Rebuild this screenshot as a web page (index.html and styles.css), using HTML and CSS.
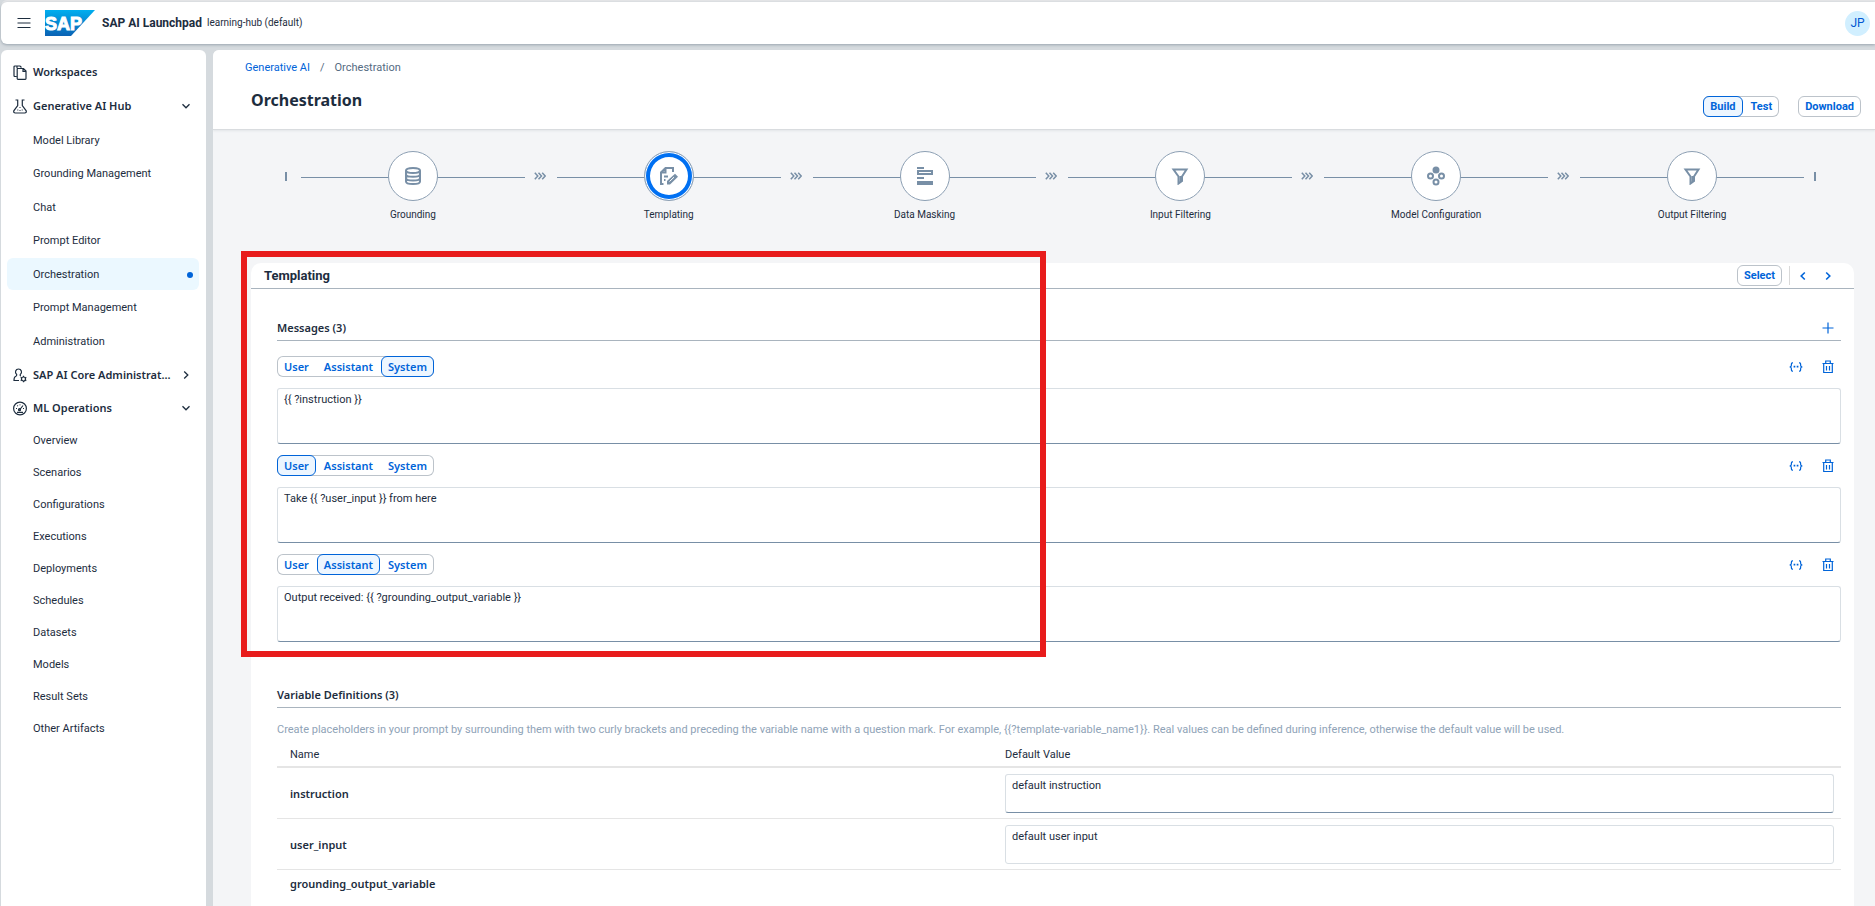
FILE: index.html
```html
<!DOCTYPE html>
<html lang="en">
<head>
<meta charset="utf-8">
<title>SAP AI Launchpad</title>
<link rel="stylesheet" href="styles.css">
</head>
<body>
<svg class="sprite" aria-hidden="true">
  <symbol id="i-down" viewBox="0 0 10 10"><path d="M1.500 3.200 5 6.800l3.500-3.600"/></symbol>
  <symbol id="i-right" viewBox="0 0 10 10"><path d="M3.200 1.500 6.800 5 3.200 8.500"/></symbol>
  <symbol id="i-left" viewBox="0 0 10 10"><path d="M6.800 1.500 3.200 5l3.600 3.500"/></symbol>
  <symbol id="i-plus" viewBox="0 0 12 12"><path d="M6 .5v11M.5 6h11"/></symbol>
  <symbol id="i-trash" viewBox="0 0 12 14"><path d="M.5 3.500h11M3.700 3.300V1h4.600v2.300M1.700 3.700v8.800h8.600V3.700M4.500 6v4.500M7.500 6v4.500"/></symbol>
  <symbol id="i-braces" viewBox="0 0 14 10"><path d="M4 .8H3.300Q2.400.8 2.400 1.900v1.400Q2.400 5 .6 5q1.800 0 1.800 1.700v1.400q0 1.100.9 1.100H4M10 .8h.7q.9 0 .9 1.100v1.400Q11.600 5 13.400 5q-1.800 0-1.800 1.700v1.400q0 1.100-.9 1.100H10"/><path d="M4.600 4.700h1.700M7.700 4.700h1.700" stroke-width="1.800"/></symbol>
  <symbol id="i-filter" viewBox="0 0 18 18"><path d="M2.500 2.500h13L11 9.500v4.500l-3.500 2.500v-7z M9.700 9v5.500"/></symbol>
  <symbol id="i-arrows" viewBox="0 0 12 8"><path d="M.8.7 3.800 4l-3 3.300M4.500.7l3 3.300-3 3.300M8.200.7l3 3.300-3 3.300"/></symbol>
</svg>

<header class="shell">
  <button class="plain menu" aria-label="Menu"><svg width="14" height="10" viewBox="0 0 14 10"><path d="M.5.5h13M.5 5h13M.5 9.500h13"/></svg></button>
  <svg class="logo" width="50" height="26" viewBox="0 0 50 26" role="img" aria-label="SAP">
    <defs><linearGradient id="g" x1="0" y1="0" x2="0" y2="1"><stop offset="0" stop-color="#00aeef"/><stop offset="1" stop-color="#0a62b4"/></linearGradient></defs>
    <path d="M0 0h50L26 26H0z" fill="url(#g)"/>
    <text x="0" y="20" class="logo-text">SAP</text>
  </svg>
  <strong class="product">SAP AI Launchpad</strong>
  <span class="tenant">learning-hub (default)</span>
  <button class="avatar">JP</button>
</header>

<div class="body">
  <nav class="side">
    <ul>
      <li><a class="top" href="#"><svg width="14" height="15" viewBox="0 0 14 15"><path d="M3.500 11.500H2Q1 11.500 1 10.500V2Q1 1 2 1h5l1.500 1.500M6.800 3.500h3.700l2.500 2.500v7.500q0 .8-.8.8H5q-.8 0-.8-.8V4.300q0-.8.800-.8zM10 3.700v2.600h2.800M4 3.300V1.200"/></svg><span>Workspaces</span></a></li>
      <li><a class="top" href="#"><svg width="14" height="15" viewBox="0 0 14 15"><path d="M2.500 1h2.200v5.500L.8 11.800Q.3 14 2.300 14h9.400q2 0 1.500-2.200L9.300 6.500V1h2.200M4.300 11h1M6.500 8.500h1M8.700 11h1M6.500 11.500h1"/></svg><span>Generative AI Hub</span><svg class="chev" width="10" height="10"><use href="#i-down"/></svg></a>
        <ul class="sub hub">
          <li><a href="#">Model Library</a></li>
          <li><a href="#">Grounding Management</a></li>
          <li><a href="#">Chat</a></li>
          <li><a href="#">Prompt Editor</a></li>
          <li><a href="#" class="current" aria-current="page">Orchestration</a></li>
          <li><a href="#">Prompt Management</a></li>
          <li><a href="#">Administration</a></li>
        </ul>
      </li>
      <li><a class="top" href="#"><svg width="14" height="15" viewBox="0 0 14 15"><path d="M5.500 1a3 3 0 0 1 1.800 5.400Q6.800 8 8 8M5.500 1A3 3 0 0 0 3.700 6.400Q4 8 2.500 8.500 1 9 1 12.500h5"/><circle cx="10.500" cy="11" r="2"/><path d="M10.500 7.800V9M10.500 13v1.300M7.700 9.400l1.100.6M12.200 12l1.100.6M7.700 12.600l1.100-.6M12.200 10l1.100-.6"/></svg><span>SAP AI Core Administrat...</span><svg class="chev" width="10" height="10"><use href="#i-right"/></svg></a></li>
      <li><a class="top ml" href="#"><svg width="14" height="15" viewBox="0 0 14 15"><circle cx="7" cy="7.500" r="6.400"/><path d="M6.500 9 10 4.500M3 7.500h1M4.300 4.500l.6.600M7 3.500v.8M10 7.500h1M4 11.300h6"/><circle cx="6.500" cy="8.700" r="1"/></svg><span>ML Operations</span><svg class="chev" width="10" height="10"><use href="#i-down"/></svg></a>
        <ul class="sub">
          <li><a href="#">Overview</a></li>
          <li><a href="#">Scenarios</a></li>
          <li><a href="#">Configurations</a></li>
          <li><a href="#">Executions</a></li>
          <li><a href="#">Deployments</a></li>
          <li><a href="#">Schedules</a></li>
          <li><a href="#">Datasets</a></li>
          <li><a href="#">Models</a></li>
          <li><a href="#">Result Sets</a></li>
          <li><a href="#">Other Artifacts</a></li>
        </ul>
      </li>
    </ul>
  </nav>

  <main class="main">
    <div class="page-head">
      <div class="crumbs"><a href="#">Generative AI</a><span>/</span><span>Orchestration</span></div>
      <div class="title-row">
        <h1>Orchestration</h1>
        <div class="seg"><button class="on">Build</button><button>Test</button></div>
        <button class="btn">Download</button>
      </div>
    </div>

    <ol class="flow">
      <li class="cap"></li>
      <li class="step"><span class="node"><svg width="18" height="20" viewBox="0 0 18 20"><ellipse cx="9" cy="4.500" rx="7" ry="2.600"/><path d="M2 4.500v11c0 3.400 14 3.400 14 0v-11M2 8.200c0 3.400 14 3.400 14 0M2 11.900c0 3.400 14 3.400 14 0"/></svg></span><span class="label">Grounding</span></li>
      <li class="next"><svg width="12" height="8"><use href="#i-arrows"/></svg></li>
      <li class="step active"><span class="node"><svg width="20" height="20" viewBox="0 0 20 20"><path d="M4.500 18H2V6.500L6.500 2H14v4M6.500 2v4.500H2M5 10.500h4M5 14h1.500"/><path class="solid thin" d="M8 18.500V15l8-7.300 3 3L11 18.500z"/><path class="gap" d="M10.500 15.500 15 11.200"/></svg></span><span class="label">Templating</span></li>
      <li class="next"><svg width="12" height="8"><use href="#i-arrows"/></svg></li>
      <li class="step"><span class="node"><svg width="18" height="20" viewBox="0 0 18 20"><path class="solid" d="M1 1h7v2H1zM1 11h7v2H1zM1 15h16v4H1zM1 4h16v5H1zm2 2v1h12V6z" fill-rule="evenodd" stroke="none"/></svg></span><span class="label">Data Masking</span></li>
      <li class="next"><svg width="12" height="8"><use href="#i-arrows"/></svg></li>
      <li class="step"><span class="node"><svg width="18" height="18"><use href="#i-filter"/></svg></span><span class="label">Input Filtering</span></li>
      <li class="next"><svg width="12" height="8"><use href="#i-arrows"/></svg></li>
      <li class="step"><span class="node"><svg width="18" height="20" viewBox="0 0 18 20"><circle class="solid" cx="9" cy="4" r="2.500"/><circle cx="3.500" cy="10" r="2.500"/><circle cx="14.500" cy="10" r="2.500"/><circle cx="9" cy="16" r="2.500"/></svg></span><span class="label">Model Configuration</span></li>
      <li class="next"><svg width="12" height="8"><use href="#i-arrows"/></svg></li>
      <li class="step"><span class="node"><svg width="18" height="18"><use href="#i-filter"/></svg></span><span class="label">Output Filtering</span></li>
      <li class="cap end"></li>
    </ol>

    <section class="card">
      <div class="card-head">
        <h2>Templating</h2>
        <button class="btn">Select</button>
        <span class="sep"></span>
        <button class="plain nav" aria-label="Previous"><svg width="10" height="10"><use href="#i-left"/></svg></button>
        <button class="plain nav" aria-label="Next"><svg width="10" height="10"><use href="#i-right"/></svg></button>
      </div>

      <div class="block messages">
        <div class="block-head"><h3>Messages (3)</h3><button class="plain" aria-label="Add message"><svg width="12" height="12"><use href="#i-plus"/></svg></button></div>

        <div class="message">
          <div class="tools"><div class="seg"><button>User</button><button>Assistant</button><button class="on">System</button></div><button class="plain braces" aria-label="Insert variable"><svg width="14" height="10"><use href="#i-braces"/></svg></button><button class="plain" aria-label="Delete"><svg width="12" height="14"><use href="#i-trash"/></svg></button></div>
          <textarea aria-label="System message">{{ ?instruction }}</textarea>
        </div>
        <div class="message">
          <div class="tools"><div class="seg"><button class="on">User</button><button>Assistant</button><button>System</button></div><button class="plain braces" aria-label="Insert variable"><svg width="14" height="10"><use href="#i-braces"/></svg></button><button class="plain" aria-label="Delete"><svg width="12" height="14"><use href="#i-trash"/></svg></button></div>
          <textarea aria-label="User message">Take {{ ?user_input }} from here</textarea>
        </div>
        <div class="message">
          <div class="tools"><div class="seg"><button>User</button><button class="on">Assistant</button><button>System</button></div><button class="plain braces" aria-label="Insert variable"><svg width="14" height="10"><use href="#i-braces"/></svg></button><button class="plain" aria-label="Delete"><svg width="12" height="14"><use href="#i-trash"/></svg></button></div>
          <textarea aria-label="Assistant message">Output received: {{ ?grounding_output_variable }}</textarea>
        </div>
      </div>

      <div class="block">
        <div class="block-head"><h3>Variable Definitions (3)</h3></div>
        <p class="hint">Create placeholders in your prompt by surrounding them with two curly brackets and preceding the variable name with a question mark. For example, {{?template-variable_name1}}. Real values can be defined during inference, otherwise the default value will be used.</p>
        <table>
          <thead><tr><th scope="col">Name</th><th scope="col" class="val">Default Value</th></tr></thead>
          <tbody>
            <tr><td><label for="v1">instruction</label></td><td class="val"><textarea id="v1">default instruction</textarea></td></tr>
            <tr><td><label for="v2">user_input</label></td><td class="val"><textarea id="v2" class="flat">default user input</textarea></td></tr>
            <tr class="last"><td>grounding_output_variable</td><td class="val"></td></tr>
          </tbody>
        </table>
      </div>
      <div class="highlight"></div>
    </section>
  </main>
</div>
</body>
</html>
```
FILE: styles.css
```css
* { box-sizing: border-box; }
body {
  margin: 0;
  height: 100vh;
  overflow: hidden;
  display: flex;
  flex-direction: column;
  gap: 6px;
  padding: 2px 0 0 1px;
  background: #d5dade;
  color: #1d2d3e;
  font: 11px/16px Roboto, "Noto Sans", sans-serif;
}
button, textarea { font: inherit; color: inherit; margin: 0; }
svg { fill: none; stroke: currentColor; flex: none; }
ul, ol { list-style: none; margin: 0; padding: 0; }
h1, h2, h3, p { margin: 0; }
a { color: inherit; text-decoration: none; }
.sprite { position: absolute; width: 0; height: 0; }
.plain { display: flex; align-items: center; justify-content: center; border: 0; background: none; padding: 0; color: #0064d9; }

.shell {
  display: flex;
  align-items: center;
  height: 42px;
  padding: 0 5px 0 16px;
  background: #fff;
  border-radius: 6px 0 0 6px;
  box-shadow: 0 1px 3px #9aa5af, 0 -2px 0 #e6e7e9;
}
.menu { color: #1d2d3e; }
.logo { margin: 0 7px 0 14px; stroke: none; }
.logo-text { font: bold 18px "Liberation Sans", sans-serif; fill: #fff; stroke: #fff; stroke-width: 1; }
.product { font-size: 12px; font-weight: 700; margin-right: 5px; }
.tenant { font-size: 10px; }
.avatar {
  margin-left: auto;
  width: 25px;
  height: 25px;
  padding: 0;
  border: 0;
  border-radius: 50%;
  background: #d1efff;
  color: #0057d2;
  font-size: 12px;
}

.body { flex: 1; min-height: 0; display: flex; gap: 7px; }
.side {
  width: 205px;
  flex: none;
  padding: 5px 6px;
  background: #fff;
  border-radius: 6px 6px 0 0;
}
.side a { display: flex; align-items: center; height: 32px; margin: 0 1px 0 0; border-radius: 6px; padding: 1px 6px 0 26px; }
.side .top { height: 34px; padding: 0 8px 0 6px; gap: 6px; font-family: "Noto Sans", sans-serif; font-weight: 600; }
.side .ml { height: 32px; }
.side .chev { margin-left: auto; stroke-width: 1.300; }
.top svg { stroke-width: 1.200; }
.hub li { height: 34px; display: grid; align-items: center; }
.hub li:nth-child(2), .hub li:nth-child(4), .hub li:nth-child(6) { height: 33px; }
.side .current { background: #ebf8ff; }
.current::after { content: ""; width: 6px; height: 6px; border-radius: 50%; background: #0064d9; margin-left: auto; }

.main { flex: 1; min-width: 0; overflow: hidden; background: #f4f5f7; border-radius: 6px 0 0 0; }
.page-head { height: 80px; padding: 10px 14px 0 32px; background: #fff; border-bottom: 1px solid #d9dcdf; box-shadow: 0 1px 2px #e2e5e8; }
.crumbs { display: flex; gap: 10px; color: #556b82; }
.crumbs a { color: #0064d9; }
.title-row { display: flex; align-items: flex-start; padding: 12px 0 0 6px; }
h1 { font-family: "Noto Sans", sans-serif; font-size: 16px; line-height: 24px; font-weight: 700; margin-right: auto; }
.seg { display: flex; gap: 1px; border-radius: 6px; box-shadow: inset 0 0 0 1px #bcc3ca; }
.seg button, .btn {
  height: 21px;
  padding: 0 6px;
  border: 1px solid transparent;
  border-radius: 6px;
  background: none;
  color: #0064d9;
  font-weight: 700;
  line-height: 19px;
}
.seg .on { border-color: #0064d9; background: #edf6ff; }
.btn { border-color: #bcc3ca; background: #fff; }
.title-row .seg, .title-row .btn { margin-top: 8px; }
.title-row .btn { margin-left: 19px; }

.flow { display: flex; padding: 21px 58px 0 72px; }
.cap { width: 16px; padding-top: 21px; }
.cap::before { content: ""; display: block; width: 2px; height: 9px; background: #788fa6; }
.end { width: 3px; margin-left: 10px; }
.step { flex: 1; display: grid; justify-items: center; gap: 5px; background: linear-gradient(#788fa6, #788fa6) 0 26px / 100% 1px no-repeat; }
.node {
  display: grid;
  place-items: center;
  width: 50px;
  height: 50px;
  border: 1px solid #8c9fb3;
  border-radius: 50%;
  background: #fff;
  color: #788fa6;
}
.node svg { stroke-width: 2; }
.solid { fill: currentColor; }
.thin { stroke: none; }
.gap { stroke: #fff; stroke-width: 1; }
.active .node { box-shadow: inset 0 0 0 1px #fff, inset 0 0 0 5px #0070f2; }
.label { font-size: 10px; line-height: 18px; }
.next { width: 32px; padding: 21px 2px 0 0; display: flex; justify-content: center; align-items: start; color: #788fa6; }
.next svg { stroke-width: 1.500; }

.card { position: relative; margin: 39px 21px 0 38px; background: #fff; border-radius: 10px 10px 0 0; min-height: 700px; }
.card-head { display: flex; align-items: center; height: 26px; padding: 0 16px 0 13px; border-bottom: 1px solid #a9b4be; }
h2 { font-size: 13px; font-weight: 700; margin-right: auto; }
.sep { width: 1px; height: 19px; margin: 0 3px 0 7px; background: #d9d9d9; }
.nav { width: 20px; }
.nav + .nav { margin-left: 5px; }
.nav svg { stroke-width: 1.600; }
.block { padding: 0 13px 0 26px; }
.block-head { display: flex; align-items: center; justify-content: space-between; height: 26px; padding-right: 7px; border-bottom: 1px solid #a9b4be; }
.messages { padding-top: 26px; margin-bottom: 40px; }
h3 { font-family: "Noto Sans", sans-serif; font-size: 11px; font-weight: 600; }
.message { padding-top: 11px; }
.block-head + .message { padding-top: 15px; }
.tools { display: flex; align-items: center; height: 21px; padding-right: 7px; margin-bottom: 11px; }
.tools svg, .block-head svg { stroke-width: 1.200; }
.tools .seg button { font-family: "Noto Sans", sans-serif; font-weight: 600; line-height: 18px; }
.braces { margin: 0 19px 0 auto; }
textarea {
  display: block;
  width: 100%;
  height: 56px;
  padding: 3px 6px;
  border: 1px solid #d9dfe4;
  border-bottom-color: #788fa6;
  border-radius: 3px;
  background: #fff;
  resize: none;
  overflow: hidden;
}
.flat { border-bottom-color: #d9dfe4; }
.hint { color: #8fa3b7; padding: 14px 0 9px; }
table { width: 100%; border-collapse: separate; border-spacing: 0; table-layout: fixed; }
th { font-weight: 400; text-align: left; padding: 0 0 3px 13px; border-bottom: 2px solid #e5e5e5; }
td { padding: 6px 0 5px 13px; border-bottom: 1px solid #e5e5e5; font-family: "Noto Sans", sans-serif; font-weight: 600; }
td textarea { height: 39px; font-family: Roboto, sans-serif; font-weight: 400; }
.val { width: 836px; padding-left: 0; padding-right: 7px; }
.last td { border-bottom: 0; }
.highlight {
  position: absolute;
  left: -10px;
  top: -12px;
  width: 805px;
  height: 406px;
  border: 6px solid #e81c1c;
  pointer-events: none;
}
```
